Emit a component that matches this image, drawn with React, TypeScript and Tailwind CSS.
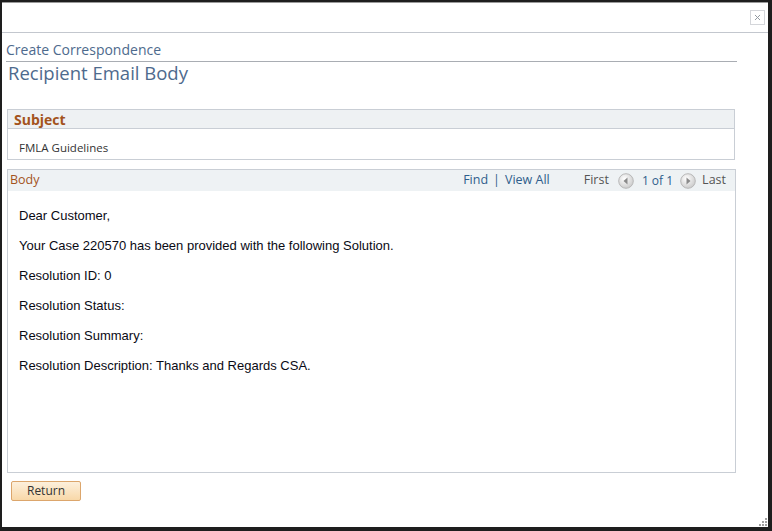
import { X } from "lucide-react";

const bodyLines = [
  "Dear Customer,",
  "Your Case 220570 has been provided with the following Solution.",
  "Resolution ID: 0",
  "Resolution Status:",
  "Resolution Summary:",
  "Resolution Description: Thanks and Regards CSA.",
];

function NavArrow({ dir }: { dir: "left" | "right" }) {
  return (
    <svg width="16" height="16" viewBox="0 0 16 16">
      <defs>
        <radialGradient id={`g-${dir}`} cx="40%" cy="35%" r="70%">
          <stop offset="0%" stopColor="#ffffff" />
          <stop offset="100%" stopColor="#c9c9c9" />
        </radialGradient>
      </defs>
      <circle cx="8" cy="8" r="7.3" fill={`url(#g-${dir})`} stroke="#b8b8b8" />
      {dir === "left" ? (
        <polygon points="9.5,4.5 5.5,8 9.5,11.5" fill="#8a8a8a" />
      ) : (
        <polygon points="6.5,4.5 10.5,8 6.5,11.5" fill="#8a8a8a" />
      )}
    </svg>
  );
}

export default function App() {
  return (
    <div
      className="w-[772px] h-[531px] bg-[#1e1e1e] pl-[2px] pt-[2px] pr-[4px] pb-[4px] overflow-hidden"
      style={{ fontFamily: "'Liberation Sans', Arial, sans-serif" }}
    >
      <div className="relative w-full h-full bg-white border-t border-[#9a9a9a] flex flex-col">
        {/* title bar */}
        <div className="h-[30px] shrink-0 border-b border-[#c3c7ce] flex items-start justify-end pr-[3px] pt-[7px]">
          <div className="w-[15px] h-[15px] border border-[#d4d6da] flex items-center justify-center text-[#8d949c]">
            <X size={9} strokeWidth={2.5} />
          </div>
        </div>

        <div className="px-[4px] pt-[8px]">
          <div className="text-[14px] text-[#4e6a8d] leading-[17px] pb-[3px] w-[731px] border-b border-[#a9adb3] font-['Open_Sans',sans-serif]">
            Create Correspondence
          </div>
          <div className="text-[18.5px] text-[#4e6a8d] leading-[22px] pl-[2px] font-['Open_Sans',sans-serif]">
            Recipient Email Body
          </div>
        </div>

        {/* subject */}
        <div className="ml-[5px] mt-[25px] w-[728px] border border-[#c9ced5]">
          <div className="h-[19px] bg-[#eef1f3] border-b border-[#c9ced5] flex items-center pl-[6px] text-[14px] font-bold text-[#a3531c] font-['Open_Sans',sans-serif]">
            Subject
          </div>
          <div className="h-[30px] pt-[11px] pl-[11px] text-[11.5px] leading-[16px] text-[#333] font-['Open_Sans',sans-serif]">
            FMLA Guidelines
          </div>
        </div>

        {/* body */}
        <div className="ml-[5px] mt-[9px] w-[729px] h-[304px] border border-[#c9ced5] flex flex-col">
          <div className="h-[21px] bg-[#eef2f4] flex items-center pl-[2px] pr-[9px] text-[12.5px] font-['Open_Sans',sans-serif]">
            <span className="text-[#a3531c]">Body</span>
            <div className="ml-auto flex items-center">
              <span className="text-[#2e5e8c]">Find</span>
              <span className="text-[#2e5e8c] mx-[5px]">|</span>
              <span className="text-[#2e5e8c]">View All</span>
              <span className="text-[#555] ml-[34px]">First</span>
              <span className="ml-[9px] flex"><NavArrow dir="left" /></span>
              <span className="text-[#2e5e8c] text-[12px] ml-[8px]">1 of 1</span>
              <span className="ml-[7px] flex"><NavArrow dir="right" /></span>
              <span className="text-[#555] ml-[6px]">Last</span>
            </div>
          </div>
          <div className="pl-[11px] pt-[17px] flex flex-col gap-[15px] text-[13px] text-[#0a0a14] leading-[15px]">
            {bodyLines.map((line) => (
              <p key={line}>{line}</p>
            ))}
          </div>
        </div>

        <div className="ml-[9px] mt-[5px]">
          <button className="w-[70px] h-[20px] rounded-[2px] border border-[#dca66c] bg-gradient-to-b from-[#fdf0dc] to-[#f8d8a8] text-[12px] leading-[18px] text-[#333] font-['Open_Sans',sans-serif]">
            Return
          </button>
        </div>

        {/* resize grip */}
        <div className="absolute right-[1px] bottom-[1px] grid grid-cols-3 gap-[1px]">
          {[0, 0, 1, 0, 1, 1, 1, 1, 1].map((on, i) => (
            <span key={i} className={on ? "w-[2px] h-[2px] bg-[#a0a0a0]" : "w-[2px] h-[2px]"} />
          ))}
        </div>
      </div>
    </div>
  );
}
